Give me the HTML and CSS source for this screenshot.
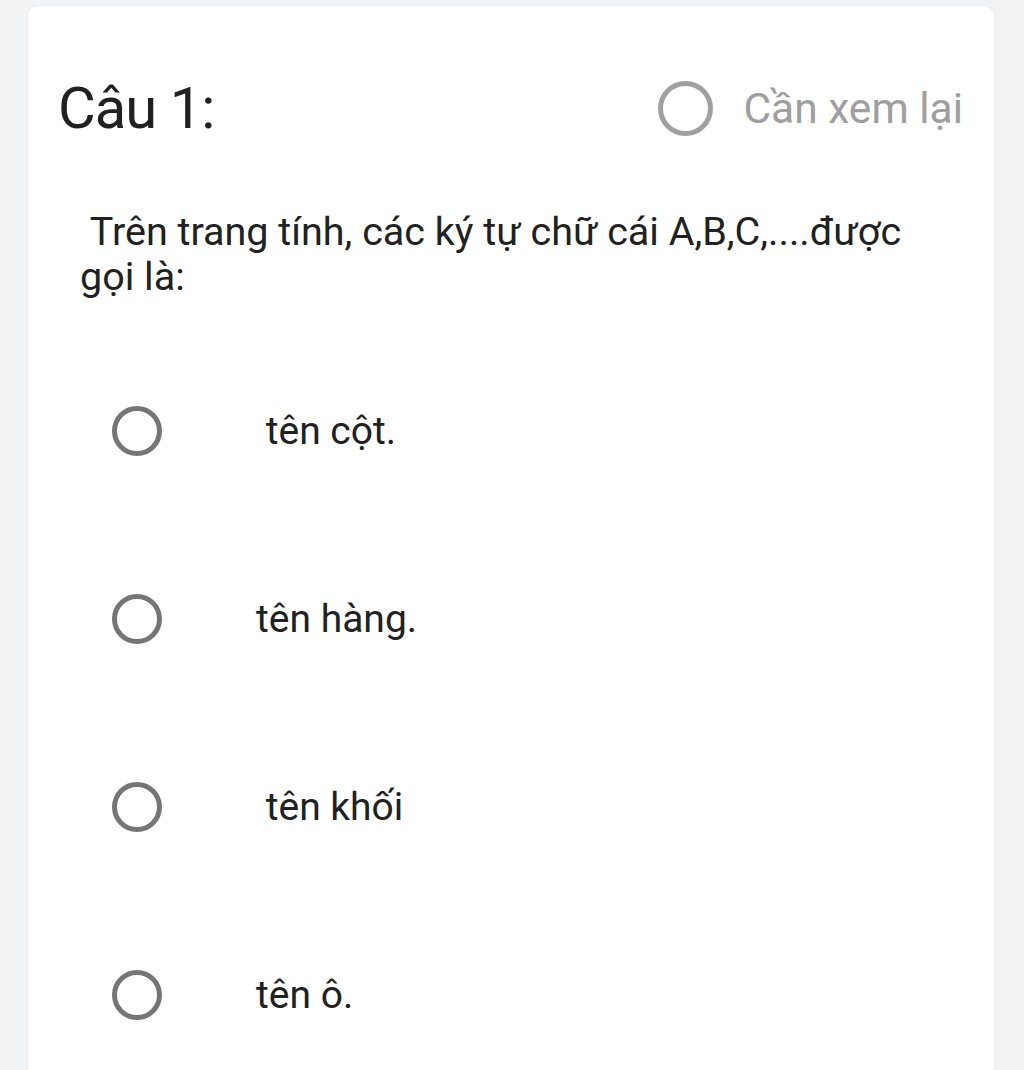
FILE: index.html
```html
<!DOCTYPE html>
<html lang="vi">
<head>
  <meta charset="UTF-8">
  <title>Câu 1</title>
  <link rel="stylesheet" href="styles.css">
</head>
<body>
  <div class="card">
    <div class="header">
      <h2 class="title">Câu 1:</h2>
      <label class="review"><span class="radio radio-light"></span><span>Cần xem lại</span></label>
    </div>
    <p class="question"> Trên trang tính, các ký tự chữ cái A,B,C,....được gọi là:</p>
    <form class="options">
      <label class="option"><span class="radio"></span><span class="option-text"> tên cột.</span></label>
      <label class="option"><span class="radio"></span><span class="option-text">tên hàng.</span></label>
      <label class="option"><span class="radio"></span><span class="option-text"> tên khối</span></label>
      <label class="option"><span class="radio"></span><span class="option-text">tên ô.</span></label>
    </form>
  </div>
</body>
</html>
```

FILE: styles.css
```css
body {
  margin: 0;
  padding: 0;
  background-color: #f2f3f5;
  font-family: Roboto, "Noto Sans", Arial, sans-serif;
  color: #212121;
}
.card {
  margin: 6px 30px 0 28px;
  min-height: 1100px;
  background: #fff;
  border-radius: 10px;
  box-shadow: 0 0 2px rgba(0,0,0,0.08);
  padding: 64px 31px 0 30px;
}
.header {
  display: flex;
  justify-content: space-between;
  align-items: center;
  height: 76px;
}
.title {
  margin: 0;
  font-size: 58px;
  font-weight: 400;
  letter-spacing: -1px;
}
.review {
  display: flex;
  align-items: center;
  gap: 30px;
  font-size: 42.5px;
  color: #9e9e9e;
}
.radio {
  display: block;
  box-sizing: border-box;
  width: 50px;
  height: 50px;
  border: 5px solid #757575;
  border-radius: 50%;
  flex-shrink: 0;
}
.radio-light {
  width: 55px;
  height: 55px;
  border-color: #a0a0a0;
}
.question {
  margin: 63px 40px 0 22px;
  font-size: 39.5px;
  line-height: 45px;
  white-space: pre-wrap;
}
.options {
  margin: 38px 0 0 54px;
}
.option {
  display: flex;
  align-items: center;
  height: 188px;
  font-size: 39px;
}
.option-text {
  margin-left: 94px;
  white-space: pre-wrap;
}
```
